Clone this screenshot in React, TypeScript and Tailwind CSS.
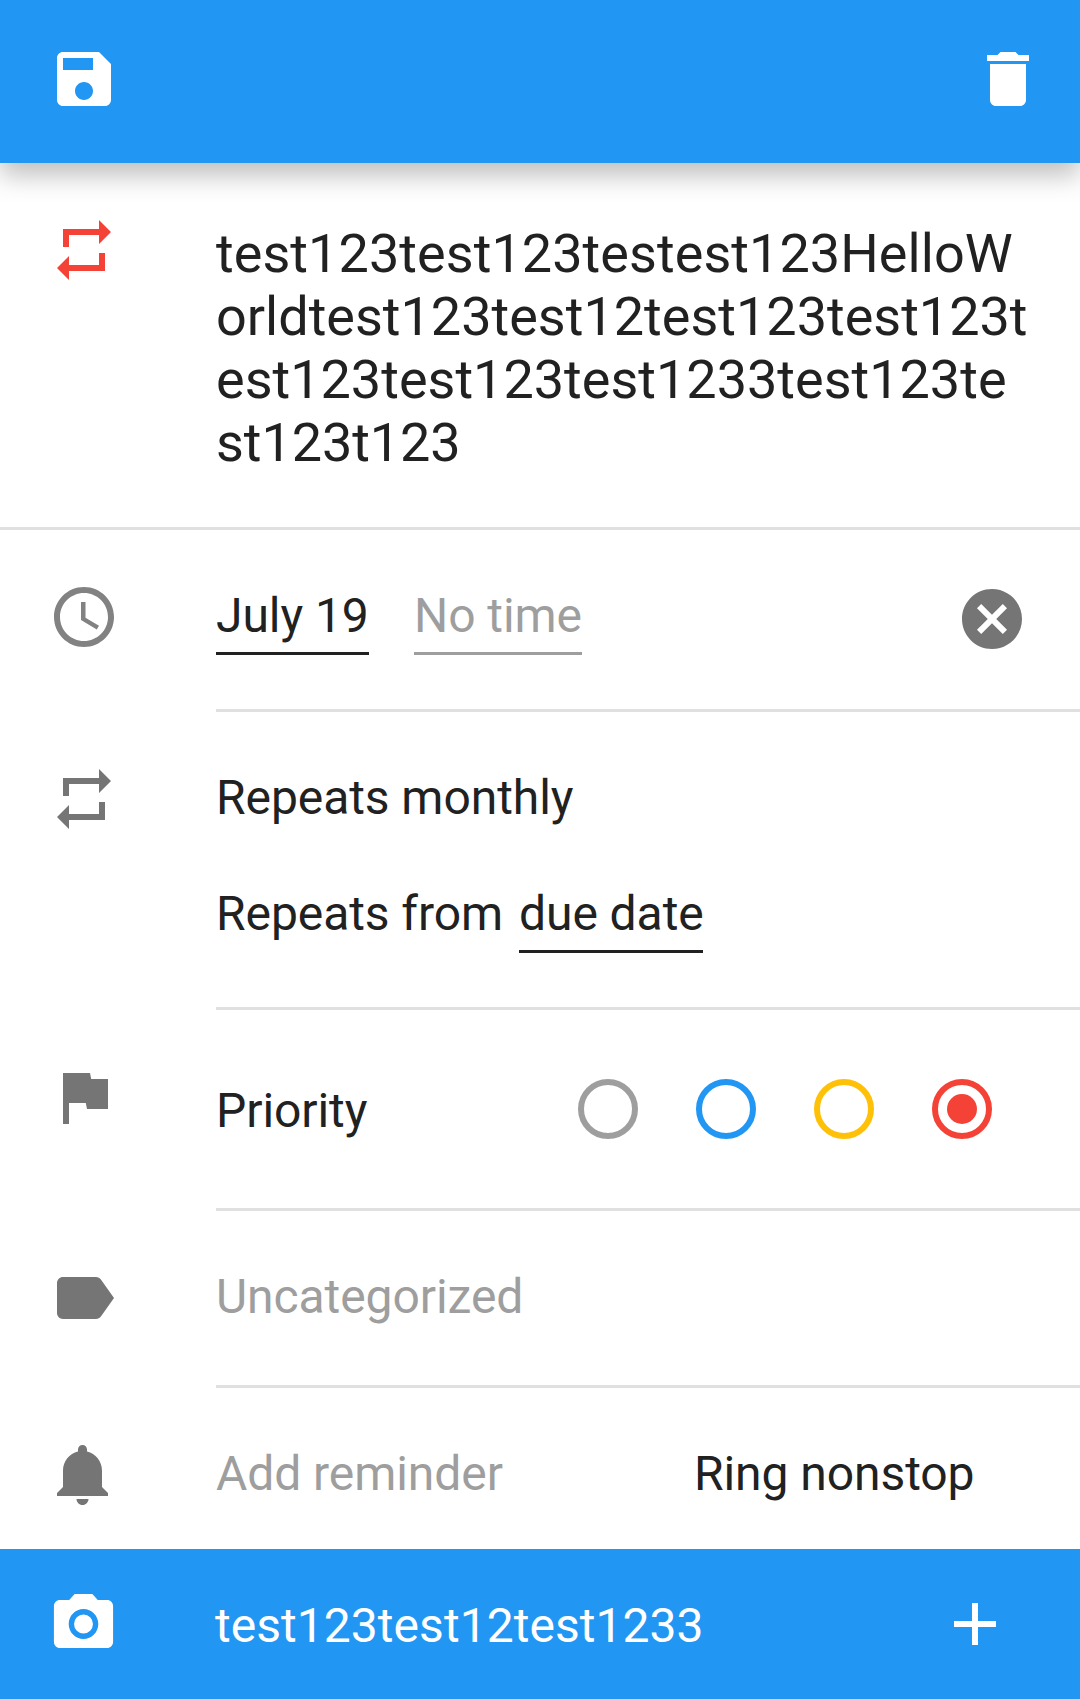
import type { ReactNode } from "react";

const paths = {
  save: "M17 3H5c-1.11 0-2 .9-2 2v14c0 1.1.89 2 2 2h14c1.1 0 2-.9 2-2V7l-4-4zm-2 6H5V5h10v4zm-3 10c-1.66 0-3-1.34-3-3s1.34-3 3-3 3 1.34 3 3-1.34 3-3 3z",
  trash: "M6 19c0 1.1.9 2 2 2h8c1.1 0 2-.9 2-2V7H6v12zM19 4h-3.5l-1-1h-5l-1 1H5v2h14V4z",
  repeat: "M7 7h10v3l4-4-4-4v3H5v6h2V7zm10 10H7v-3l-4 4 4 4v-3h12v-6h-2v4z",
  clock:
    "M11.99 2C6.47 2 2 6.48 2 12s4.47 10 9.99 10C17.52 22 22 17.52 22 12S17.52 2 11.99 2zM12 20c-4.42 0-8-3.58-8-8s3.58-8 8-8 8 3.58 8 8-3.58 8-8 8zM12.5 7H11v6l5.25 3.15.75-1.23-4.5-2.67V7z",
  cancel:
    "M12 2C6.47 2 2 6.47 2 12s4.47 10 10 10 10-4.47 10-10S17.53 2 12 2zm5 13.59L15.59 17 12 13.41 8.41 17 7 15.59 10.59 12 7 8.41 8.41 7 12 10.59 15.59 7 17 8.41 13.41 12 17 15.59z",
  flag: "M14.4 6L14 4H5v17h2v-7h5.6l.4 2h7V6z",
  label:
    "M17.63 5.84C17.27 5.33 16.67 5 16 5L5 5.01C3.9 5.01 3 5.9 3 7v10c0 1.1.9 1.99 2 1.99L16 19c.67 0 1.27-.33 1.63-.84L22 12l-4.37-6.16z",
  bell: "M11.5 22c1.1 0 2-.9 2-2h-4c0 1.1.9 2 2 2zm6.5-6v-5.5c0-3.07-2.13-5.64-5-6.32V3.5c0-.83-.67-1.5-1.5-1.5S10 2.67 10 3.5v.68c-2.87.68-5 3.25-5 6.32V16l-2 2v1h17v-1l-2-2z",
  camera:
    "M12 8.8a3.2 3.2 0 1 0 0 6.4 3.2 3.2 0 0 0 0-6.4zM9 2L7.17 4H4c-1.1 0-2 .9-2 2v12c0 1.1.9 2 2 2h16c1.1 0 2-.9 2-2V6c0-1.1-.9-2-2-2h-3.17L15 2H9zm3 15c-2.76 0-5-2.24-5-5s2.24-5 5-5 5 2.24 5 5-2.24 5-5 5z",
  plus: "M19 13h-6v6h-2v-6H5v-2h6V5h2v6h6v2z",
};

function Icon({ name, className = "" }: { name: keyof typeof paths; className?: string }) {
  return (
    <svg
      viewBox="0 0 24 24"
      fill="currentColor"
      preserveAspectRatio="none"
      className={`h-[72px] shrink-0 ${name === "camera" ? "w-[71px]" : "w-[72px]"} ${className}`}
    >
      <path d={paths[name]} />
    </svg>
  );
}

function Row({
  icon,
  height,
  divided = true,
  children,
}: {
  icon: ReactNode;
  height: string;
  divided?: boolean;
  children: ReactNode;
}) {
  return (
    <section className={`flex ${height}`}>
      <div className="w-[216px] shrink-0 pl-12">{icon}</div>
      <div
        className={`min-w-0 flex-1 tracking-[-0.07px] ${divided ? "border-b-[3px] border-[#e0e0e0]" : ""}`}
      >
        {children}
      </div>
    </section>
  );
}

const priorities = [
  { color: "text-[#9e9e9e]", selected: false },
  { color: "text-[#2196f3]", selected: false },
  { color: "text-[#ffc107]", selected: false },
  { color: "text-[#f44336]", selected: true },
];

export default function App() {
  return (
    <main
      className="flex h-[1699px] w-[1080px] flex-col overflow-hidden bg-white text-[48px] leading-[57px] text-[#212121]"
      style={{ fontFamily: 'Roboto, "Liberation Sans", sans-serif' }}
    >
      <header className="relative flex h-[163px] shrink-0 justify-between bg-[#2196f3] px-12 pt-[43px] pr-9 text-white shadow-[0_12px_25px_rgba(0,0,0,0.26)]">
        <Icon name="save" />
        <Icon name="trash" />
      </header>

      <section className="flex h-[367px] shrink-0 border-b-[3px] border-[#e0e0e0]">
        <div className="w-[216px] shrink-0 pt-[51px] pl-12">
          <Icon name="repeat" className="text-[#f44336]" />
        </div>
        <h1 className="pt-[59px] text-[54px] leading-[63px] font-normal whitespace-nowrap">
          <span className="tracking-[0.06px]">test123test123testest123HelloW</span>
          <br />
          orldtest123test12test123test123t
          <br />
          est123test123test1233test123te
          <br />
          <span className="tracking-[-0.08px]">st123t123</span>
        </h1>
      </section>

      <Row height="h-[182px]" icon={<Icon name="clock" className="mt-[51px] text-[#757575] opacity-90" />}>
        <div className="flex">
          <span className="mt-[57px] h-[68px] w-[153px] border-b-[3px] border-[#212121] whitespace-nowrap">
            July 19
          </span>
          <span className="mt-[57px] ml-[45px] h-[68px] w-[168px] border-b-[3px] border-[#9e9e9e] whitespace-nowrap text-[#9e9e9e]">
            No time
          </span>
          <Icon name="cancel" className="mt-[53px] mr-[52px] ml-auto text-[#757575]" />
        </div>
      </Row>

      <Row height="h-[298px]" icon={<Icon name="repeat" className="mt-[51px] text-[#757575]" />}>
        <div className="pt-[57px]">Repeats monthly</div>
        <div className="flex pt-[59px]">
          <span className="w-[303px] whitespace-nowrap">Repeats from</span>
          <span className="h-[68px] w-[184px] border-b-[3px] border-[#212121] whitespace-nowrap">
            due date
          </span>
        </div>
      </Row>

      <Row height="h-[201px]" icon={<Icon name="flag" className="mt-[51px] text-[#757575]" />}>
        <div className="flex justify-between pr-[88px]">
          <span className="pt-[72px]">Priority</span>
          <div className="mt-[69px] flex gap-[58px]">
            {priorities.map((p) => (
              <span
                key={p.color}
                className={`flex size-[60px] items-center justify-center rounded-full border-[6px] border-current ${p.color}`}
              >
                {p.selected && <span className="size-[30px] rounded-full bg-current" />}
              </span>
            ))}
          </div>
        </div>
      </Row>

      <Row height="h-[177px]" icon={<Icon name="label" className="mt-[51px] text-[#757575]" />}>
        <div className="pt-[57px] text-[#9e9e9e]">Uncategorized</div>
      </Row>

      <Row height="h-[161px]" divided={false} icon={<Icon name="bell" className="mt-[51px] text-[#757575]" />}>
        <div className="flex pt-[57px]">
          <span className="w-[478px] text-[#9e9e9e]">Add reminder</span>
          <span>Ring nonstop</span>
        </div>
      </Row>

      <footer className="flex h-[150px] shrink-0 bg-[#2196f3] pr-[69px] pl-12 text-white">
        <Icon name="camera" className="mt-[39px]" />
        <span className="ml-24 pt-[48px] tracking-[0.04px]">test123test12test1233</span>
        <Icon name="plus" className="mt-[39px] ml-auto" />
      </footer>
    </main>
  );
}
